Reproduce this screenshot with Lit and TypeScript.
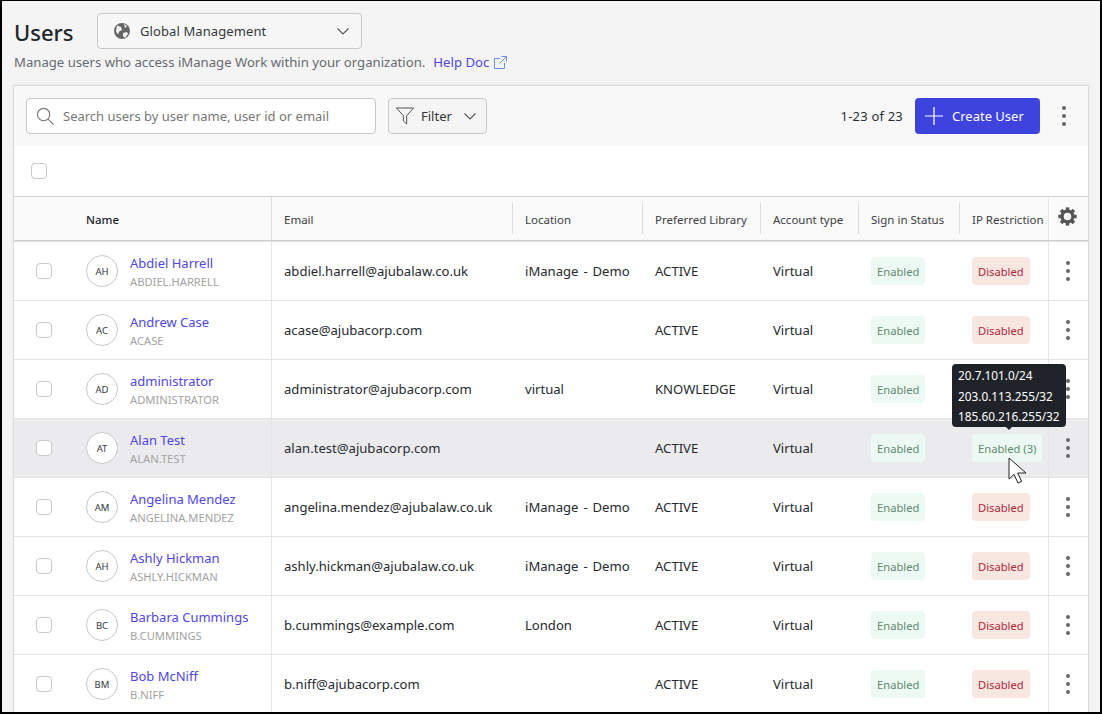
import { LitElement, css, html, svg } from "lit";
import { customElement } from "lit/decorators.js";

type User = { initials: string; name: string; id: string; email: string; location: string; library: string; ip: string };

const users: User[] = [
  { initials: "AH", name: "Abdiel Harrell", id: "ABDIEL.HARRELL", email: "abdiel.harrell@ajubalaw.co.uk", location: "iManage - Demo", library: "ACTIVE", ip: "Disabled" },
  { initials: "AC", name: "Andrew Case", id: "ACASE", email: "acase@ajubacorp.com", location: "", library: "ACTIVE", ip: "Disabled" },
  { initials: "AD", name: "administrator", id: "ADMINISTRATOR", email: "administrator@ajubacorp.com", location: "virtual", library: "KNOWLEDGE", ip: "Disabled" },
  { initials: "AT", name: "Alan Test", id: "ALAN.TEST", email: "alan.test@ajubacorp.com", location: "", library: "ACTIVE", ip: "Enabled (3)" },
  { initials: "AM", name: "Angelina Mendez", id: "ANGELINA.MENDEZ", email: "angelina.mendez@ajubalaw.co.uk", location: "iManage - Demo", library: "ACTIVE", ip: "Disabled" },
  { initials: "AH", name: "Ashly Hickman", id: "ASHLY.HICKMAN", email: "ashly.hickman@ajubalaw.co.uk", location: "iManage - Demo", library: "ACTIVE", ip: "Disabled" },
  { initials: "BC", name: "Barbara Cummings", id: "B.CUMMINGS", email: "b.cummings@example.com", location: "London", library: "ACTIVE", ip: "Disabled" },
  { initials: "BM", name: "Bob McNiff", id: "B.NIFF", email: "b.niff@ajubacorp.com", location: "", library: "ACTIVE", ip: "Disabled" },
];

const chevron = svg`<path d="M.5.5L6 6l5.500-5.500" fill="none" stroke="currentColor" stroke-width="1.100"/>`;
const dots = html`<span class="dots"><i></i><i></i><i></i></span>`;
const gearTeeth = [0, 45, 90, 135, 180, 225, 270, 315];

@customElement("app-root")
export class AppRoot extends LitElement {
  static styles = css`
    :host {
      display: block;
      box-sizing: border-box;
      width: 1102px;
      height: 714px;
      overflow: hidden;
      background: #f4f4f4;
      border: solid #000;
      border-width: 1px 2px 2px 2px;
      padding: 12px 11px 0 11px;
      font-family: "Noto Sans", "Open Sans", sans-serif;
      font-size: 13px;
      color: #262a30;
    }
    .title { display: flex; align-items: center; height: 36px; padding-left: 1px; }
    h1 { margin: 2px 21px 0 0; font-size: 22px; font-weight: 500; line-height: 36px; color: #22262b; width: 62px; }
    .scope {
      box-sizing: border-box; width: 265px; height: 36px; display: flex; align-items: center;
      border: 1px solid #c8c8c8; border-radius: 4px; background: #f7f7f7; padding: 0 12px 0 15px; color: #33373c;
    }
    .scope span { flex: 1; margin-left: 9px; letter-spacing: .1px; }
    .scope .chev { color: #555; }
    .sub { display: flex; align-items: center; height: 22px; margin-top: 2px; padding-left: 1px; color: #666a70; font-size: 13.150px; }
    .sub a { color: #4f46e5; margin-left: 8px; display: flex; align-items: center; gap: 5px; }
    .card {
      margin-top: 12px; background: #fff; border: 1px solid #dcdcdc; border-bottom: 0;
      box-shadow: 0 0 2px rgba(0,0,0,.08);
    }
    .toolbar { display: flex; align-items: center; height: 60px; padding: 0 12px; background: #f8f8f8; }
    .search {
      box-sizing: border-box; width: 350px; height: 36px; display: flex; align-items: center; gap: 8px;
      background: #fff; border: 1px solid #c8c8c8; border-radius: 4px; padding: 0 9px; color: #777;
    }
    .filter {
      box-sizing: border-box; width: 99px; height: 36px; margin-left: 12px; display: flex; align-items: center;
      border: 1px solid #c8c8c8; border-radius: 4px; background: #f5f5f5; padding: 0 7px; gap: 7px; color: #33373c;
    }
    .filter .chev { color: #555; margin-left: 5px; }
    .count { margin-left: auto; color: #2b3038; letter-spacing: .2px; }
    .create {
      box-sizing: border-box; width: 125px; height: 36px; margin-left: 12px; display: flex; align-items: center;
      background: #3f43dd; color: #fff; border-radius: 4px; padding: 0 10px; gap: 9px;
    }
    .toolbar .dots { margin: 0 10px 0 22px; }
    .select-row { height: 50px; display: flex; align-items: center; padding-left: 17px; }
    .check { box-sizing: border-box; width: 16px; height: 16px; border: 1px solid #c9c9c9; border-radius: 4px; background: #fff; display: block; }
    .row {
      display: grid;
      grid-template-columns: 60px 197px 241px 130px 118px 98px 101px 89px 40px;
      height: 59px; border-top: 1px solid #e2e2e2; box-sizing: border-box;
    }
    .row.head { height: 45px; background: #fafafa; border-top: 1px solid #cfcfcf; border-bottom: 1px solid #cfcfcf; font-size: 11.500px; color: #3a3e44; }
    .row.hover { background: #ebebed; }
    .cell { display: flex; align-items: center; padding-left: 12px; min-width: 0; white-space: nowrap; }
    .head .cell { position: relative; padding: 1px 0 0 13px; }
    .head .sep::before { content: ""; position: absolute; left: 0; top: 6px; bottom: 6px; width: 1px; background: #dcdcdc; }
    .head .cell.name { padding-left: 12px; font-weight: 500; color: #22262b; }
    .head .cell.full { border-left: 1px solid #dcdcdc; padding-left: 12px; }
    .row:not(.head) .mail { border-left: 1px solid #e6e6e6; }
    .row:not(.head) .cell.text { padding-left: 13px; font-size: 13.100px; word-spacing: 1.500px; }
    .row:not(.head) .cell.mail { padding-left: 12px; }
    .pick { padding-left: 22px; }
    .person { gap: 12px; }
    .avatar {
      box-sizing: border-box; width: 32px; height: 32px; border-radius: 50%; border: 1px solid #c9c9c9; background: #fff;
      display: flex; align-items: center; justify-content: center; font-size: 9.500px; color: #33373c; flex: none;
    }
    .who { padding-top: 3px; }
    .who a { display: block; color: #4f46e5; line-height: 19px; }
    .who small { display: block; font-size: 11.200px; line-height: 18px; color: #a3a3a3; }
    .row:not(.head) .cell .pill { display: inline-block; padding: 0 6px; height: 28px; line-height: 29px; border-radius: 4px; font-size: 11.200px; word-spacing: 0; }
    .pill.on { background: #edf9f3; color: #5d8a70; }
    .pill.off { background: #f8e6e1; color: #b0283a; }
    .ip { position: relative; }
    .tip {
      position: absolute; left: -7px; top: -55px; z-index: 2; box-sizing: border-box; background: #1f2329; color: #fff;
      border-radius: 4px; padding: 1px 6px 0; font-size: 11.800px; line-height: 20.500px; width: 114px; height: 63px;
    }
    .tip::after {
      content: ""; position: absolute; left: 50%; bottom: -3px; margin-left: -3px;
      border: solid transparent; border-width: 3px 3px 0; border-top-color: #1f2329;
    }
    .cursor { position: absolute; left: 49px; top: 38px; z-index: 3; }
    .act { border-left: 1px solid #e6e6e6; justify-content: center; padding-right: 2px; }
    .row.head .act { padding: 0 2px 4px 0; }
    .row:not(.head) .act { padding-left: 0; }
    .dots { display: inline-flex; flex-direction: column; gap: 4px; }
    .dots i { width: 4px; height: 4px; border-radius: 50%; background: #666; display: block; }
  `;

  renderRow(u: User) {
    const hover = u.ip !== "Disabled";
    return html`<div class="row ${hover ? "hover" : ""}">
      <div class="cell pick"><span class="check"></span></div>
      <div class="cell person">
        <span class="avatar">${u.initials}</span>
        <div class="who"><a>${u.name}</a><small>${u.id}</small></div>
      </div>
      <div class="cell text mail">${u.email}</div>
      <div class="cell text">${u.location}</div>
      <div class="cell text">${u.library}</div>
      <div class="cell text">Virtual</div>
      <div class="cell text"><span class="pill on">Enabled</span></div>
      <div class="cell text ip">
        <span class="pill ${hover ? "on" : "off"}">${u.ip}</span>
        ${hover
          ? html`<div class="tip">20.7.101.0/24<br />203.0.113.255/32<br />185.60.216.255/32</div>
              <svg class="cursor" width="20" height="28" viewBox="0 0 20 28">
                <path d="M1 1v21l5-4.600 4 8.600 3.600-1.700-3.900-8.300H18z" fill="#fff" stroke="#222" stroke-width="1"/>
              </svg>`
          : ""}
      </div>
      <div class="cell act">${dots}</div>
    </div>`;
  }

  render() {
    return html`
      <div class="title">
        <h1>Users</h1>
        <div class="scope">
          <svg width="18" height="18" viewBox="0 0 18 18">
            <circle cx="9" cy="9" r="8" fill="#666"/>
            <path d="M4 3.500l4 1.500 1 3-3 1.500-1 3-2-3zM11 2l3 2-2 2zM10 11l4-1 1 2-3 4-2-2z" fill="#f7f7f7"/>
          </svg>
          <span>Global Management</span>
          <svg class="chev" width="12" height="7" viewBox="0 0 12 7">${chevron}</svg>
        </div>
      </div>
      <div class="sub">
        Manage users who access iManage Work within your organization.
        <a>Help Doc
          <svg width="13" height="13" viewBox="0 0 13 13" fill="none" stroke="#6f8fe8" stroke-width="1">
            <path d="M10.500 7v5.500h-10v-10H6M7.500.5h5v5M12.500.5L5.500 7.500"/>
          </svg>
        </a>
      </div>
      <div class="card">
        <div class="toolbar">
          <div class="search">
            <svg width="19" height="19" viewBox="0 0 20 20" fill="none" stroke="#777" stroke-width="1.200">
              <circle cx="8" cy="8" r="6.500"/><path d="M12.800 12.800l5.700 5.700"/>
            </svg>
            Search users by user name, user id or email
          </div>
          <div class="filter">
            <svg width="18" height="18" viewBox="0 0 18 18" fill="none" stroke="#555" stroke-width="1">
              <path d="M.5 1h17l-6.800 7.600V17l-3.400-3V8.600z"/>
            </svg>
            Filter
            <svg class="chev" width="12" height="7" viewBox="0 0 12 7">${chevron}</svg>
          </div>
          <span class="count">1-23 of 23</span>
          <div class="create">
            <svg width="18" height="18" viewBox="0 0 18 18" stroke="#fff" stroke-width="1.200"><path d="M9 0v18M0 9h18"/></svg>
            Create User
          </div>
          ${dots}
        </div>
        <div class="select-row"><span class="check"></span></div>
        <div class="row head">
          <div class="cell"></div>
          <div class="cell name">Name</div>
          <div class="cell full">Email</div>
          <div class="cell sep">Location</div>
          <div class="cell sep">Preferred Library</div>
          <div class="cell sep">Account type</div>
          <div class="cell sep">Sign in Status</div>
          <div class="cell sep">IP Restriction</div>
          <div class="cell act">
            <svg width="19" height="19" viewBox="0 0 24 24">
              ${gearTeeth.map((a) => svg`<rect x="9.800" y="0.500" width="4.400" height="6" fill="#555" transform="rotate(${a} 12 12)"/>`)}
              <circle cx="12" cy="12" r="6.800" fill="none" stroke="#555" stroke-width="4"/>
            </svg>
          </div>
        </div>
        ${users.map((u) => this.renderRow(u))}
      </div>
    `;
  }
}
